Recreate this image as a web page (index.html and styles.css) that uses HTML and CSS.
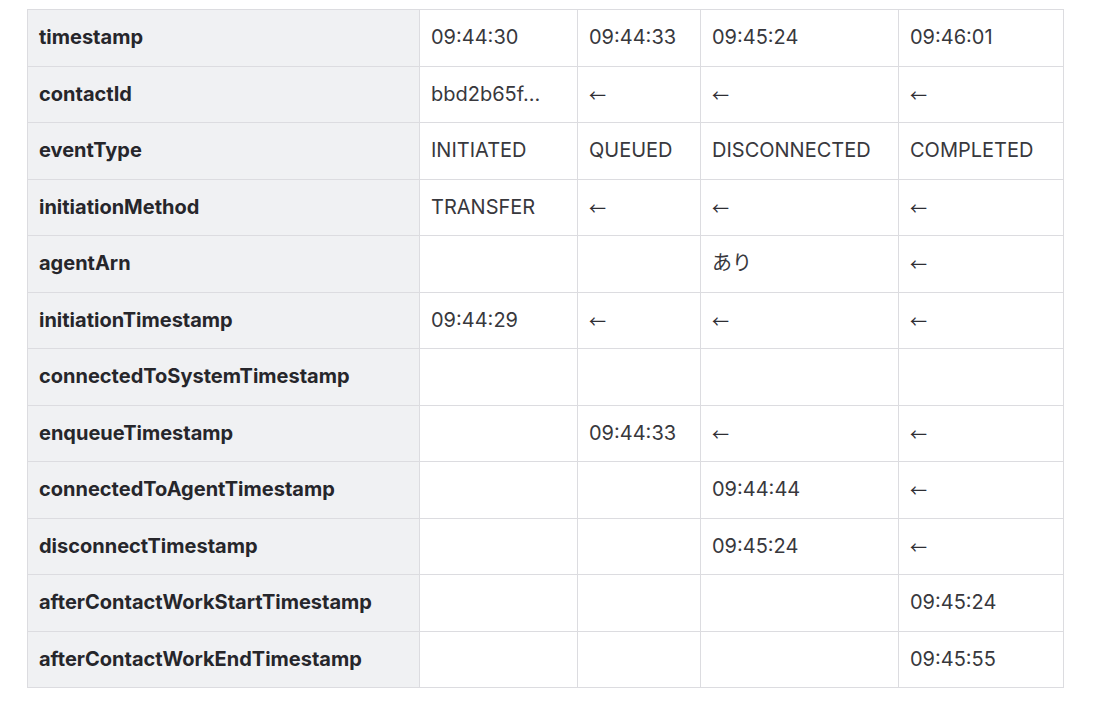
FILE: index.html
```html
<!DOCTYPE html>
<html lang="ja">
<head>
<meta charset="utf-8">
<title>Contact events</title>
<link rel="stylesheet" href="styles.css">
</head>
<body>
<div class="wrap">
<table class="events">
<colgroup>
<col class="c-key"><col class="c-1"><col class="c-2"><col class="c-3"><col class="c-4">
</colgroup>
<tbody>
<tr><th>timestamp</th><td>09:44:30</td><td>09:44:33</td><td>09:45:24</td><td>09:46:01</td></tr>
<tr><th>contactId</th><td>bbd2b65f...</td><td class="same">←</td><td class="same">←</td><td class="same">←</td></tr>
<tr><th>eventType</th><td>INITIATED</td><td>QUEUED</td><td>DISCONNECTED</td><td>COMPLETED</td></tr>
<tr><th>initiationMethod</th><td>TRANSFER</td><td class="same">←</td><td class="same">←</td><td class="same">←</td></tr>
<tr><th>agentArn</th><td></td><td></td><td>あり</td><td class="same">←</td></tr>
<tr><th>initiationTimestamp</th><td>09:44:29</td><td class="same">←</td><td class="same">←</td><td class="same">←</td></tr>
<tr><th>connectedToSystemTimestamp</th><td></td><td></td><td></td><td></td></tr>
<tr><th>enqueueTimestamp</th><td></td><td>09:44:33</td><td class="same">←</td><td class="same">←</td></tr>
<tr><th>connectedToAgentTimestamp</th><td></td><td></td><td>09:44:44</td><td class="same">←</td></tr>
<tr><th>disconnectTimestamp</th><td></td><td></td><td>09:45:24</td><td class="same">←</td></tr>
<tr><th>afterContactWorkStartTimestamp</th><td></td><td></td><td></td><td>09:45:24</td></tr>
<tr><th>afterContactWorkEndTimestamp</th><td></td><td></td><td></td><td>09:45:55</td></tr>
</tbody>
</table>
</div>
</body>
</html>
```
FILE: styles.css
```css
html, body {
  margin: 0;
  padding: 0;
  background: #ffffff;
}
.wrap {
  padding: 9px 0 0 27px;
}
.events {
  border-collapse: collapse;
  table-layout: fixed;
  width: 1036px;
  font-family: Inter, "Noto Sans CJK JP", sans-serif;
  font-size: 20px;
  color: #38383d;
}
.c-key { width: 392px; }
.c-1 { width: 158px; }
.c-2 { width: 123px; }
.c-3 { width: 198px; }
.c-4 { width: 165px; }
.events th, .events td {
  border: 1px solid #dcdce0;
  padding: 16px 11px;
  height: 23.5px;
  line-height: 23.5px;
  text-align: left;
  vertical-align: middle;
  white-space: nowrap;
}
.events th {
  background: #f0f1f3;
  font-weight: 700;
  color: #26262b;
}
.events td.same {
  font-family: "Noto Sans CJK JP", sans-serif;
  font-size: 17px;
  color: #2e2e33;
}
```
